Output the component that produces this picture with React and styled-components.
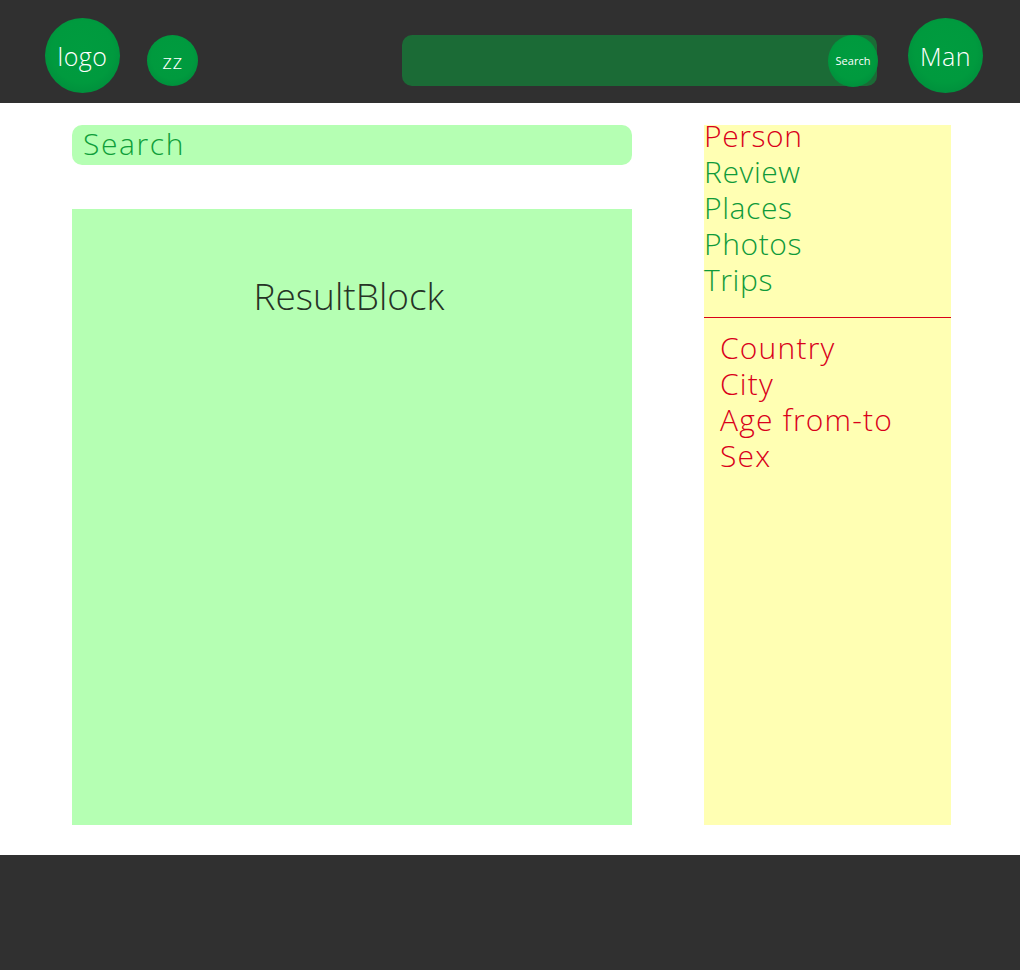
import React from 'react';
import styled, { createGlobalStyle } from 'styled-components';

const GlobalStyle = createGlobalStyle`
  html, body {
    margin: 0;
    padding: 0;
    background: #ffffff;
    font-family: "Open Sans", "DejaVu Sans", sans-serif;
    font-weight: 300;
  }
`;

const Page = styled.div`
  display: flex;
  flex-direction: column;
  width: 1020px;
`;

const Header = styled.header`
  height: 103px;
  background: #303030;
  display: flex;
  align-items: flex-start;
  padding: 18px 37px 0 45px;
  box-sizing: border-box;
`;

const Bubble = styled.div`
  width: ${props => props.size}px;
  height: ${props => props.size}px;
  margin-top: ${props => props.offset || 0}px;
  margin-left: ${props => props.gap || 0}px;
  border-radius: 50%;
  background: radial-gradient(circle at 50% 45%, #009c3f 0%, #009a3e 55%, #00843a 100%);
  color: #ffffff;
  display: flex;
  align-items: center;
  justify-content: center;
  font-size: ${props => props.fontSize}px;
  letter-spacing: 0.5px;
  flex-shrink: 0;
`;

const HeaderSearch = styled.div`
  margin: 17px 0 0 204px;
  width: 476px;
  height: 51px;
  border-radius: 10px;
  background: #1b6b36;
  display: flex;
  justify-content: flex-end;
  align-items: center;
`;

const SearchButton = styled.button`
  width: 50px;
  height: 52px;
  border: none;
  border-radius: 50%;
  background: radial-gradient(circle at 50% 45%, #009c3f 0%, #009a3e 55%, #00843a 100%);
  color: #ffffff;
  font-family: inherit;
  font-size: 11px;
  padding: 0;
  margin-right: -1px;
`;

const Main = styled.main`
  display: grid;
  grid-template-columns: 560px 247px;
  column-gap: 72px;
  padding: 22px 0 30px 72px;
  height: 752px;
  box-sizing: border-box;
`;

const LeftColumn = styled.div`
  display: flex;
  flex-direction: column;
  gap: 44px;
`;

const SearchField = styled.div`
  height: 40px;
  border-radius: 10px;
  background: #b5ffb3;
  color: #0f9e3a;
  font-size: 30px;
  line-height: 38px;
  letter-spacing: 1.6px;
  padding-left: 11px;
`;

const ResultBlock = styled.section`
  flex: 1;
  background: #b5ffb3;
  color: #263326;
  font-size: 37px;
  text-align: center;
  padding: 61px 6px 0 0;
`;

const Sidebar = styled.aside`
  background: #ffffb3;
  display: flex;
  flex-direction: column;
`;

const TabList = styled.div`
  display: flex;
  flex-direction: column;
  padding-bottom: 19px;
  border-bottom: 1px solid #d9001b;
`;

const Item = styled.div`
  font-size: 30px;
  line-height: 36px;
  letter-spacing: 0.6px;
  color: ${props => (props.active ? '#d9001b' : '#0f9a3a')};
  margin-top: ${props => (props.first ? -7 : 0)}px;
`;

const FilterList = styled.div`
  display: flex;
  flex-direction: column;
  padding: 12px 0 0 16px;
`;

const Filter = styled.div`
  font-size: 30px;
  line-height: 36px;
  letter-spacing: 1.2px;
  color: #d9001b;
`;

const Footer = styled.footer`
  height: 115px;
  background: #303030;
`;

const tabs = ['Person', 'Review', 'Places', 'Photos', 'Trips'];
const filters = ['Country', 'City', 'Age from-to', 'Sex'];

const App = () => (
  <Page>
    <GlobalStyle />
    <Header>
      <Bubble size={75} fontSize={25}>logo</Bubble>
      <Bubble size={51} fontSize={21} offset={17} gap={27}>zz</Bubble>
      <HeaderSearch>
        <SearchButton>Search</SearchButton>
      </HeaderSearch>
      <Bubble size={75} fontSize={25} gap={31}>Man</Bubble>
    </Header>
    <Main>
      <LeftColumn>
        <SearchField>Search</SearchField>
        <ResultBlock>ResultBlock</ResultBlock>
      </LeftColumn>
      <Sidebar>
        <TabList>
          {tabs.map((t, i) => (
            <Item key={t} active={i === 0} first={i === 0}>{t}</Item>
          ))}
        </TabList>
        <FilterList>
          {filters.map(f => <Filter key={f}>{f}</Filter>)}
        </FilterList>
      </Sidebar>
    </Main>
    <Footer />
  </Page>
);

export default App;
